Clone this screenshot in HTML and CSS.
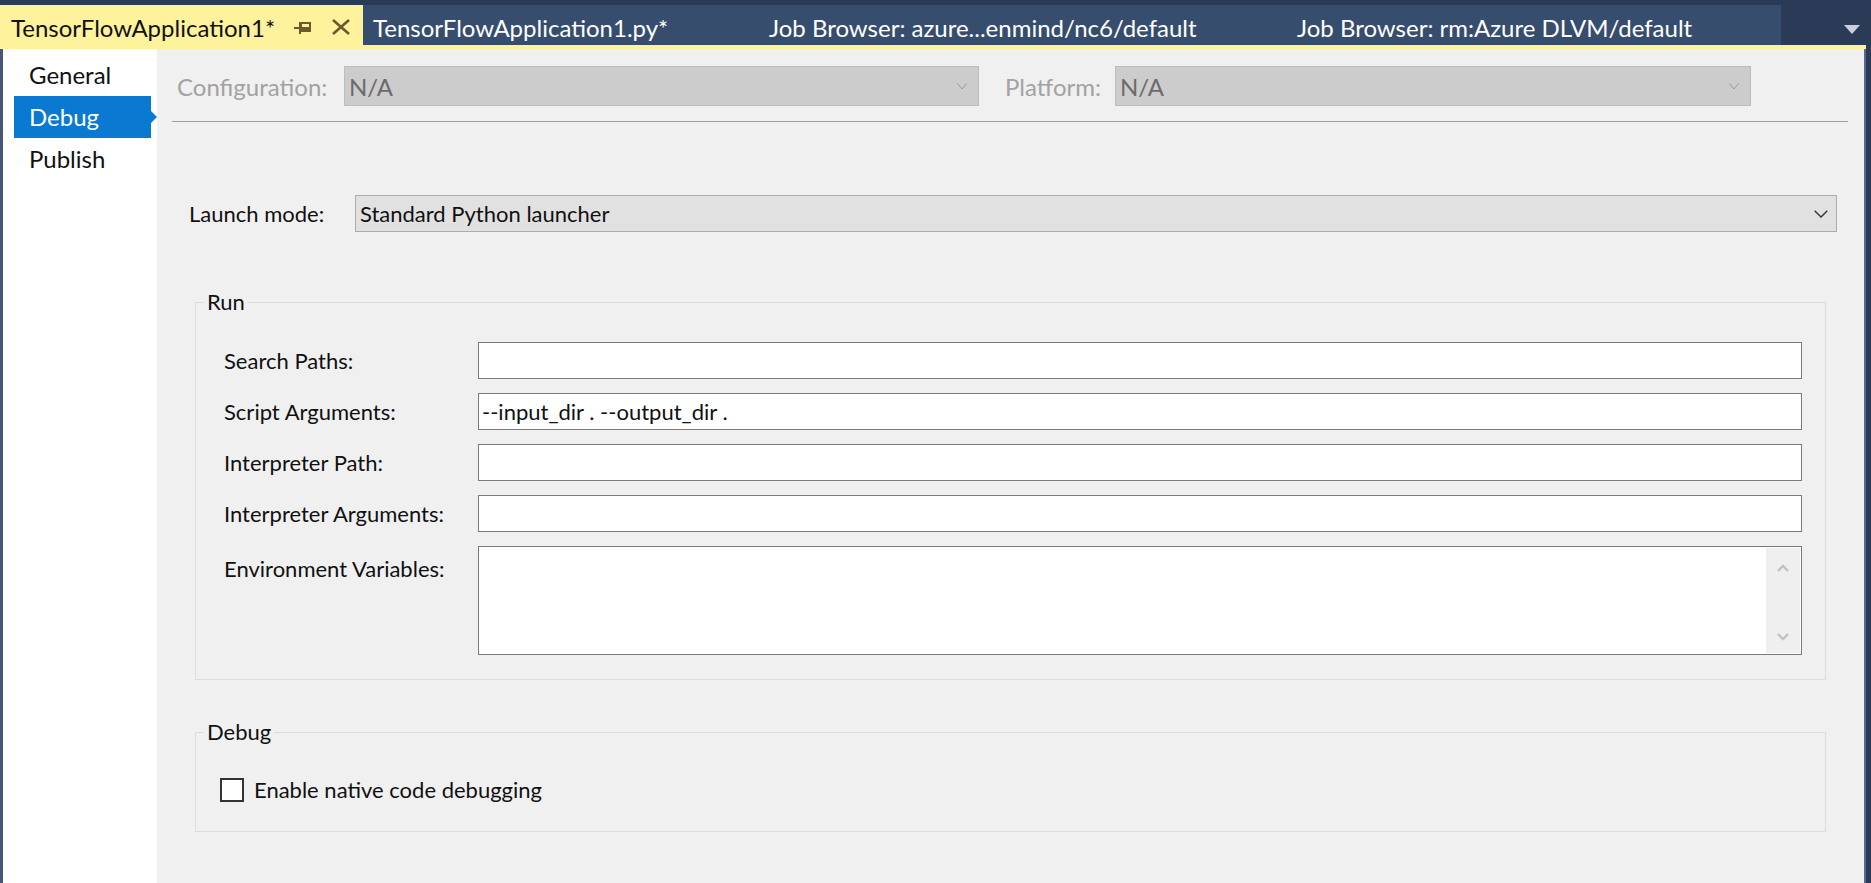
FILE: index.html
```html
<!DOCTYPE html>
<html>
<head>
<meta charset="utf-8">
<link rel="stylesheet" href="styles.css">
</head>
<body>
<div class="app">
  <div class="tabstrip">
    <div class="tab-active">
      <span class="tab-title">TensorFlowApplication1*</span>
      <svg class="pin" width="17" height="13" viewBox="0 0 17 13"><path d="M0 7h6" stroke="#6b5a2d" stroke-width="2"/><path d="M6 1v12" stroke="#6b5a2d" stroke-width="2"/><rect x="7" y="2" width="9" height="8" fill="none" stroke="#6b5a2d" stroke-width="2"/><rect x="7" y="6" width="9" height="4" fill="#6b5a2d"/></svg>
      <svg class="close" width="20" height="16" viewBox="0 0 20 16"><path d="M2 1L18 15M18 1L2 15" stroke="#6b5a2d" stroke-width="2.6"/></svg>
    </div>
    <div class="tabwell">
      <div class="tab tab2">TensorFlowApplication1.py*</div>
      <div class="tab tab3">Job Browser: azure...enmind/nc6/default</div>
      <div class="tab tab4">Job Browser: rm:Azure DLVM/default</div>
    </div>
    <div class="overflow">
      <svg width="16" height="9" viewBox="0 0 16 9"><path d="M0 0h16L8 9z" fill="#c9cfdc"/></svg>
    </div>
  </div>
  <div class="accent"></div>
  <div class="body">
    <nav class="nav">
      <div class="nav-item">General</div>
      <div class="nav-item selected">Debug</div>
      <div class="nav-item">Publish</div>
    </nav>
    <main class="content">
      <div class="config-row">
        <span class="dim-label cfg-label">Configuration:</span>
        <div class="dim-combo combo-cfg"><span>N/A</span><svg width="10" height="7" viewBox="0 0 10 7"><path d="M0.5 0.5L5 6L9.5 0.5" fill="none" stroke="#9a9a9a" stroke-width="1"/></svg></div>
        <span class="dim-label plat-label">Platform:</span>
        <div class="dim-combo combo-plat"><span>N/A</span><svg width="10" height="7" viewBox="0 0 10 7"><path d="M0.5 0.5L5 6L9.5 0.5" fill="none" stroke="#9a9a9a" stroke-width="1"/></svg></div>
      </div>
      <div class="separator"></div>
      <div class="launch-row">
        <span class="launch-label">Launch mode:</span>
        <div class="combo"><span>Standard Python launcher</span><svg width="14" height="8" viewBox="0 0 14 8"><path d="M0.7 0.7L7 7L13.3 0.7" fill="none" stroke="#333" stroke-width="1.4"/></svg></div>
      </div>
      <fieldset class="group run-group">
        <legend>Run</legend>
        <div class="fields">
          <label class="field-label">Search Paths:</label>
          <div class="input"></div>
          <label class="field-label">Script Arguments:</label>
          <div class="input">--input_dir . --output_dir .</div>
          <label class="field-label">Interpreter Path:</label>
          <div class="input"></div>
          <label class="field-label">Interpreter Arguments:</label>
          <div class="input"></div>
          <label class="field-label env-label">Environment Variables:</label>
          <div class="textarea">
            <div class="textarea-body"></div>
            <div class="vscroll">
              <svg width="12" height="8" viewBox="0 0 12 8"><path d="M1 7L6 2L11 7" fill="none" stroke="#c2c2c2" stroke-width="2.4"/></svg>
              <svg width="12" height="8" viewBox="0 0 12 8"><path d="M1 1L6 6L11 1" fill="none" stroke="#c2c2c2" stroke-width="2.4"/></svg>
            </div>
          </div>
        </div>
      </fieldset>
      <fieldset class="group debug-group">
        <legend>Debug</legend>
        <div class="check-row">
          <span class="checkbox"></span>
          <span class="check-label">Enable native code debugging</span>
        </div>
      </fieldset>
    </main>
    <div class="edge"></div>
  </div>
</div>
</body>
</html>
```
FILE: styles.css
```css
html, body {
  margin: 0;
  padding: 0;
}
body {
  background: #2a3a57;
  font-family: Lato, "Noto Sans", sans-serif;
  color: #111;
  overflow: hidden;
}
.app {
  width: 1871px;
  height: 883px;
  display: flex;
  flex-direction: column;
}
.tabstrip {
  height: 40px;
  margin-top: 5px;
  display: flex;
}
.tab-active {
  width: 363px;
  box-sizing: border-box;
  background: #fff29d;
  display: flex;
  align-items: center;
  padding: 4px 12px 0 11px;
  color: #111;
}
.tab-title {
  flex: 1;
  font-size: 24px;
  white-space: nowrap;
}
.pin {
  margin-right: 20px;
}
.tabwell {
  flex: 1;
  background: #364d6e;
  display: flex;
}
.tab {
  box-sizing: border-box;
  display: flex;
  align-items: center;
  padding: 4px 0 0 10px;
  color: #fff;
  font-size: 24px;
  white-space: nowrap;
}
.tab2 { width: 396px; }
.tab3 { width: 528px; }
.overflow {
  width: 90px;
  display: flex;
  align-items: center;
  justify-content: flex-end;
  padding: 8px 11px 0 0;
  box-sizing: border-box;
}
.accent {
  height: 4px;
  background: #fff29d;
  margin-right: 5px;
}
.body {
  flex: 1;
  display: flex;
  min-height: 0;
}
.nav {
  width: 154px;
  background: #fff;
  border-left: 3px solid #45567a;
  padding-top: 5px;
}
.nav-item {
  height: 42px;
  line-height: 42px;
  padding-left: 26px;
  font-size: 24px;
  color: #111;
}
.nav-item.selected {
  position: relative;
  margin-left: 11px;
  width: 137px;
  box-sizing: border-box;
  padding-left: 15px;
  background: #0a79d1;
  color: #fff;
}
.nav-item.selected::after {
  content: "";
  position: absolute;
  right: -6px;
  top: 15px;
  border-left: 6px solid #0a79d1;
  border-top: 6px solid transparent;
  border-bottom: 6px solid transparent;
}
.content {
  flex: 1;
  background: #f0f0f0;
  font-size: 22px;
  display: flex;
  flex-direction: column;
}
.config-row {
  display: flex;
  align-items: center;
  height: 40px;
  margin-top: 17px;
  padding-left: 20px;
  font-size: 24px;
}
.dim-label {
  color: #a2a2a2;
}
.cfg-label { width: 167px; }
.plat-label { width: 110px; margin-left: 26px; }
.dim-combo {
  height: 40px;
  box-sizing: border-box;
  background: #cccccc;
  border: 1px solid #bdbdbd;
  display: flex;
  align-items: center;
  justify-content: space-between;
  padding: 0 11px 0 4px;
  color: #6b6b6b;
}
.combo-cfg { width: 635px; }
.combo-plat { width: 636px; }
.separator {
  height: 1px;
  background: #a0a0a0;
  margin: 15px 16px 0 15px;
}
.launch-row {
  display: flex;
  align-items: center;
  height: 37px;
  margin-top: 73px;
  padding-left: 32px;
  margin-right: 27px;
}
.launch-label { width: 166px; }
.combo {
  flex: 1;
  height: 37px;
  box-sizing: border-box;
  background: #e1e1e1;
  border: 1px solid #adadad;
  display: flex;
  align-items: center;
  justify-content: space-between;
  padding: 0 8px 0 4px;
}
.group {
  border: 1px solid #dcdcdc;
  margin: 0 38px 0 38px;
  padding: 0;
  min-width: 0;
}
.group legend {
  font-size: 22px;
  line-height: 24px;
  margin-left: 8px;
  padding: 0 3px;
}
.run-group { margin-top: 58px; }
.debug-group { margin-top: 40px; }
.fields {
  display: grid;
  grid-template-columns: 254px 1fr;
  row-gap: 14px;
  padding: 28px 23px 24px 28px;
}
.field-label {
  align-self: center;
}
.env-label {
  align-self: start;
  line-height: 37px;
  padding-top: 4px;
}
.input {
  height: 37px;
  box-sizing: border-box;
  background: #fff;
  border: 1px solid #7a7a7a;
  display: flex;
  align-items: center;
  padding-left: 3px;
}
.textarea {
  height: 109px;
  box-sizing: border-box;
  background: #fff;
  border: 1px solid #7a7a7a;
  padding: 1px;
  display: flex;
}
.textarea-body { flex: 1; }
.vscroll {
  width: 34px;
  background: #efefef;
  display: flex;
  flex-direction: column;
  align-items: center;
  justify-content: space-between;
  padding: 16px 0 12px;
  box-sizing: border-box;
}
.check-row {
  display: flex;
  align-items: center;
  padding: 32px 0 28px 24px;
}
.checkbox {
  width: 24px;
  height: 24px;
  box-sizing: border-box;
  border: 2px solid #333;
  background: #fff;
}
.check-label {
  margin-left: 10px;
}
.edge {
  width: 7px;
  background: #2a3a57;
  border-left: 2px solid #55698f;
  box-sizing: border-box;
}
```
